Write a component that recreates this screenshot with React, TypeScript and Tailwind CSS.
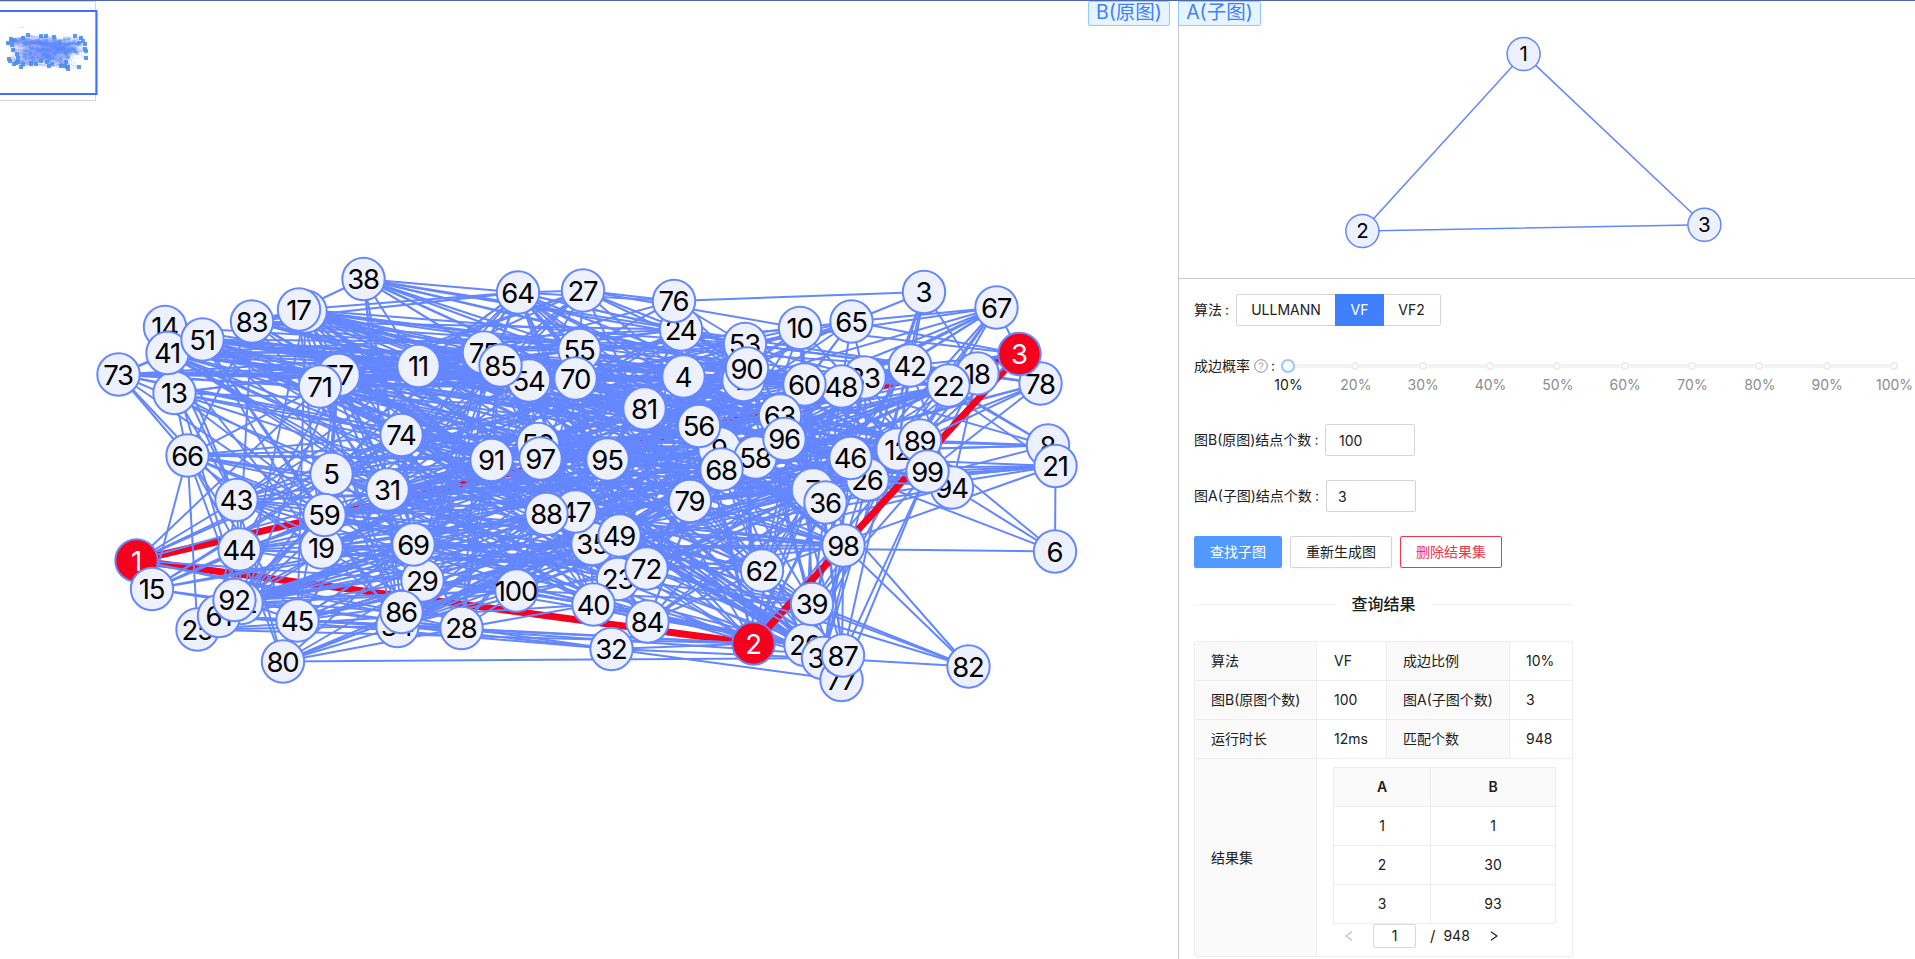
import React from 'react';

type Node = [id: number, x: number, y: number];

const NODES: Node[] = [
  [1, 136.5, 560.5], [2, 743.5, 380], [3, 924, 292], [4, 683.5, 376.5], [5, 331.5, 474], [6, 1055, 551.5],
  [7, 813, 489.5], [8, 1048, 445.5], [9, 719.5, 448.5], [10, 800, 328], [11, 418.5, 366], [12, 897.5, 449.5],
  [13, 174.5, 393], [14, 165, 327], [15, 152, 589], [16, 305.5, 311.5], [17, 299, 309.5], [18, 977.5, 373.5],
  [19, 321.5, 547.5], [20, 805.5, 645], [21, 1055.5, 466], [22, 948.5, 385.5], [23, 618, 579], [24, 681, 329.5],
  [25, 197.5, 629.5], [26, 867.5, 479.5], [27, 583, 290.5], [28, 461.5, 628], [29, 422.5, 580.5], [30, 753.5, 643.5],
  [31, 387.5, 489.5], [32, 611.5, 649], [33, 864.5, 377.5], [34, 397.5, 626], [35, 592.5, 544], [36, 825.5, 502.5],
  [37, 823, 658], [38, 363.5, 279], [39, 812, 604], [40, 593.5, 604.5], [41, 167.5, 353], [42, 910, 365.5],
  [43, 236.5, 500], [44, 239.5, 549.5], [45, 297.5, 620.5], [46, 850.5, 458], [47, 575.5, 511.5], [48, 841.5, 386.5],
  [49, 619.5, 535.5], [50, 538, 444], [51, 202.5, 339.5], [52, 241.5, 603], [53, 745, 344], [54, 529, 380.5],
  [55, 579.5, 350], [56, 699, 426], [57, 338.5, 375], [58, 755.5, 457.5], [59, 324.5, 515], [60, 804.5, 384.5],
  [61, 219, 616], [62, 762, 570.5], [63, 780, 415.5], [64, 518, 292.5], [65, 851.5, 321.5], [66, 187.5, 455.5],
  [67, 996.5, 307.5], [68, 721.5, 469.5], [69, 413.5, 544.5], [70, 575.5, 378.5], [71, 320, 386.5], [72, 646.5, 568.5],
  [73, 118.5, 374.5], [74, 401.5, 435], [75, 484, 352.5], [76, 674, 301], [77, 841.5, 680], [78, 1040.5, 383.5],
  [79, 690, 501], [80, 283, 661.5], [81, 644.5, 408.5], [82, 968.5, 666.5], [83, 252, 321.5], [84, 647.5, 621.5],
  [85, 500.5, 365.5], [86, 401.5, 612], [87, 843, 655.5], [88, 546.5, 514], [89, 920, 440.5], [90, 747, 368.5],
  [91, 491.5, 460], [92, 234.5, 600], [93, 1019.5, 354], [94, 952, 487.5], [95, 607.5, 459.5], [96, 784.5, 439],
  [97, 540.5, 458.5], [98, 843.5, 545.5], [99, 927.5, 471.5], [100, 516.5, 590.5],
];

const POS = new Map(NODES.map(([id, x, y]) => [id, [x, y] as const]));
const MATCHED: Record<number, string> = { 1: '1', 30: '2', 93: '3' };

// Neighbours of the nodes on the rim of the layout.
const RIM: Record<number, number[]> = {
  38: [64, 17, 24, 53, 75, 55, 60, 58, 11, 31, 69, 86, 54, 46, 90, 81],
  3: [76, 65, 98, 87, 39, 12, 18],
  67: [65, 93, 48, 60, 58, 36, 96, 53, 47, 12, 89, 81, 26, 79],
  6: [21, 94, 89, 69, 26],
  82: [98, 7, 39, 72, 49, 37],
  8: [89, 96, 22, 48, 12, 91, 36, 42],
  21: [99, 26, 36, 46, 68, 42, 47, 88, 62],
  78: [93, 42, 89, 99, 46, 68, 53, 24, 58],
  66: [73, 13, 71, 25, 52, 44, 45, 31, 91, 97, 74, 69, 59, 50, 83, 15, 95, 35, 86, 47],
  73: [41, 51, 71, 11, 75, 54, 70, 4, 81, 43, 59, 31, 90, 74, 97],
  1: [43, 5, 71, 74, 86, 28, 91, 29],
  15: [5, 59, 92, 31, 69, 88, 44, 74, 52],
  25: [34, 40, 30, 59],
  80: [37, 43, 44, 45, 69, 29, 49, 86, 100, 28, 35],
  77: [32, 98, 99, 39],
  14: [51, 11, 43, 55],
  13: [66, 43, 75, 91, 81, 29, 49, 24, 5, 97],
  32: [77, 28, 61, 37, 30, 34],
  27: [64, 76, 24, 55, 85, 71, 11, 90, 31, 4, 79, 91, 10, 74, 57],
  76: [24, 27, 53, 55, 75, 90, 64],
  65: [10, 67, 53, 60, 48, 33, 93, 4, 81, 56, 90, 63],
  93: [18, 22, 42, 65, 48, 10, 89],
  92: [45, 44, 86, 69, 91, 59, 100, 88, 28],
  61: [34, 28, 30, 45, 29, 43],
};

function buildEdges(): [number, number][] {
  const seen = new Set<string>();
  const edges: [number, number][] = [];
  const add = (a: number, b: number) => {
    const lo = Math.min(a, b);
    const hi = Math.max(a, b);
    const key = lo + '-' + hi;
    if (lo === hi || seen.has(key)) return;
    seen.add(key);
    edges.push([lo, hi]);
  };
  add(1, 30);
  add(1, 93);
  add(30, 93);
  for (const [id, list] of Object.entries(RIM)) list.forEach((n) => add(Number(id), n));
  const inner = NODES.map(([id]) => id).filter((id) => !RIM[id]);
  let seed = 20231;
  const next = () => {
    seed = (seed * 1103515245 + 12345) % 2147483648;
    return seed / 2147483648;
  };
  while (edges.length < 870) {
    const a = inner[Math.floor(next() * inner.length)];
    const b = inner[Math.floor(next() * inner.length)];
    const midY = (POS.get(a)![1] + POS.get(b)![1]) / 2;
    // Links thin out towards the lower half.
    if (midY > 490 && next() < 0.35) continue;
    add(a, b);
  }
  const rank = ([a, b]: [number, number]) => (a === 30 && b === 93 ? 70 : a);
  return edges.sort((a, b) => rank(a) - rank(b));
}

const EDGES = buildEdges();
const isMatch = (a: number, b: number) => a in MATCHED && b in MATCHED;

function OriginalGraph() {
  return (
    <svg width="1178" height="958" viewBox="0 1 1178 958" className="block">
      {EDGES.map(([a, b]) => {
        const [x1, y1] = POS.get(a)!;
        const [x2, y2] = POS.get(b)!;
        const hit = isMatch(a, b);
        return (
          <line key={a + '-' + b} x1={x1} y1={y1} x2={x2} y2={y2} stroke={hit ? '#f5001d' : '#6487ff'} strokeWidth={hit ? 7 : 2} />
        );
      })}
      {NODES.map(([id, x, y]) => {
        const hit = id in MATCHED;
        return (
          <g key={id}>
            <circle cx={x} cy={y} r="21.2" fill={hit ? '#f5001d' : '#ecf0ff'} stroke="#6487ff" strokeWidth="2" />
            <text x={x - 0.5} y={y + 10} textAnchor="middle" fontSize="27.5" letterSpacing="-1.2" fill={hit ? '#fff' : '#000'} className="font-['Inter',sans-serif]">
              {hit ? MATCHED[id] : id}
            </text>
          </g>
        );
      })}
    </svg>
  );
}

function Minimap() {
  const mx = (x: number) => 7.5 + (x - 118.5) * 0.0838;
  const my = (y: number) => 43.2 + (y - 374.5) * 0.083;
  return (
    <svg width="98" height="102" viewBox="0 0 98 102" className="absolute left-0 top-[-1px]">
      <path d="M0 1.5H95.5V100.5H0" fill="#fff" stroke="#d5d5d5" />
      <rect x="18" y="27" width="6" height="1" fill="#e2e5f4" />
      {EDGES.map(([a, b]) => {
        const [x1, y1] = POS.get(a)!;
        const [x2, y2] = POS.get(b)!;
        return <line key={a + '-' + b} x1={mx(x1)} y1={my(y1)} x2={mx(x2)} y2={my(y2)} stroke="#6487ff" strokeWidth="0.6" strokeOpacity="0.22" />;
      })}
      {NODES.map(([id, x, y]) => (
        <rect key={id} x={Math.round(mx(x)) - 2} y={Math.round(my(y)) - 2} width="4" height="4" fill="#4b8ff2" fillOpacity={y < 310 || y > 590 || x < 250 || x > 960 ? 0.9 : 0.4} />
      ))}
      <path d="M0 11H96.5V94H0" fill="none" stroke="#3f6fff" strokeWidth="2" />
    </svg>
  );
}

const SUB: Node[] = [[1, 1523.6, 54], [2, 1362.4, 231], [3, 1704.4, 224.8]];

function SubGraph() {
  return (
    <svg width="736" height="277" viewBox="1179 1 736 277" className="block">
      <path d="M1523.6 54L1362.4 231L1704.4 224.8Z" fill="none" stroke="#6487ff" strokeWidth="1.5" />
      {SUB.map(([id, x, y]) => (
        <g key={id}>
          <circle cx={x} cy={y} r="16.5" fill="#ecf0ff" stroke="#6487ff" strokeWidth="1.5" />
          <text x={x} y={y + 7.3} textAnchor="middle" fontSize="20.5" fill="#000" className="font-['Inter',sans-serif]">
            {id}
          </text>
        </g>
      ))}
    </svg>
  );
}

function Tag({ children, className }: { children: React.ReactNode; className: string }) {
  return (
    <span className={`absolute top-0 flex h-[25px] items-center justify-center rounded-[2px] border border-[#91caff] bg-[#e6f4ff] text-[19.5px] leading-none whitespace-nowrap text-[#3f80ff] ${className}`}>
      <span className="-mt-0.5">{children}</span>
    </span>
  );
}

function Colon() {
  return <span className="ml-[3px]">:</span>;
}

function HelpIcon() {
  return (
    <svg viewBox="0 0 14 14" className="ml-1 size-3.5" fill="none" stroke="#8c8c8c">
      <circle cx="7" cy="7" r="6.3" strokeWidth="1" />
      <path d="M5.1 5.7c0-1 .8-1.7 1.9-1.7s1.9.7 1.9 1.6c0 .8-.5 1.2-1.1 1.5-.5.2-.8.5-.8 1v.3" strokeWidth="1" />
      <path d="M7 9.4v1.1" strokeWidth="1.1" />
    </svg>
  );
}

function Arrow({ d, className }: { d: string; className: string }) {
  return (
    <svg viewBox="0 0 8 10" className={`h-2.5 w-2 ${className}`} fill="none" stroke="currentColor" strokeWidth="1.2">
      <path d={d} />
    </svg>
  );
}

function ProbabilitySlider() {
  const marks = [10, 20, 30, 40, 50, 60, 70, 80, 90, 100];
  return (
    <div className="relative h-8 w-[606px]">
      <div className="mt-[14px] h-1 rounded-[2px] bg-[#f3f3f3]" />
      {marks.map((m, i) => (
        <div key={m} className="absolute top-0 flex w-16 -translate-x-1/2 flex-col items-center" style={{ left: `${(i * 100) / 9}%` }}>
          {i === 0 ? (
            <span className="mt-[9px] size-[14px] rounded-full border-2 border-[#91caff] bg-white" />
          ) : (
            <span className="mt-3 mb-[3px] size-2 rounded-full border-2 border-[#eeeeee] bg-white" />
          )}
          <span className={`mt-[1px] pl-px text-sm leading-[22px] ${i === 0 ? 'text-[#202020]' : 'text-[#8c8c8c]'}`}>{m}%</span>
        </div>
      ))}
    </div>
  );
}

const label = 'border-r border-[#f0f0f0] bg-[#fafafa] px-4';

function Results() {
  const rows = [
    ['算法', 'VF', '成边比例', '10%'],
    ['图B(原图个数)', '100', '图A(子图个数)', '3'],
    ['运行时长', '12ms', '匹配个数', '948'],
  ];
  return (
    <div className="w-[379px] rounded-[2px] border border-[#ededed]">
      {rows.map((r) => (
        <div key={r[0]} className="grid h-[39px] grid-cols-[122px_70px_123px_62px] border-b border-[#ededed] leading-[38px] whitespace-nowrap">
          <div className={label}>{r[0]}</div>
          <div className="border-r border-[#f0f0f0] pl-[17px]">{r[1]}</div>
          <div className={label}>{r[2]}</div>
          <div className="pl-4">{r[3]}</div>
        </div>
      ))}
      <div className="flex h-[197px]">
        <div className={`flex w-[122px] items-center ${label}`}>结果集</div>
        <div className="px-4 pt-2">
          <div className="w-[223px] border border-b-0 border-[#ededed] text-center leading-[38px]">
            {[['A', 'B'], ['1', '1'], ['2', '30'], ['3', '93']].map((r, i) => (
              <div key={i} className={`grid h-[39px] grid-cols-[97px_124px] border-b border-[#ededed] ${i === 0 ? 'bg-[#fafafa] font-semibold' : ''}`}>
                <div className="border-r border-[#ededed]">{r[0]}</div>
                <div>{r[1]}</div>
              </div>
            ))}
          </div>
          <div className="flex h-6 items-center pl-3">
            <Arrow d="M7 0.7L1 5L7 9.3" className="text-[#bfbfbf]" />
            <span className="ml-5 flex h-6 w-[43px] items-center justify-center rounded-[2px] border border-[#d9d9d9]">1</span>
            <span className="ml-[14px] text-[15px]">/</span>
            <span className="ml-2">948</span>
            <Arrow d="M1 0.7L7 5L1 9.3" className="ml-5" />
          </div>
        </div>
      </div>
    </div>
  );
}

export default function App() {
  return (
    <div className="flex h-[959px] w-[1915px] overflow-hidden border-t border-[#4a68a6] bg-white font-['Inter','Noto_Sans_CJK_SC',sans-serif] text-sm text-[#202020]">
      <section className="relative w-[1178px]">
        <OriginalGraph />
        <Minimap />
        <Tag className="right-2 w-[82px]">B(原图)</Tag>
      </section>
      <aside className="relative flex flex-1 flex-col border-l border-[#c9c9c9]">
        <div className="h-[278px] border-b border-[#c9c9c9]">
          <SubGraph />
        </div>
        <Tag className="-left-px w-[83px]">A(子图)</Tag>
        <div className="flex flex-col pt-[15px] pl-[15px]">
          <div className="flex h-8 items-center">
            <span className="w-[42px] whitespace-nowrap">算法<Colon /></span>
            <div className="flex h-8 w-[205px] rounded-[2px] border border-[#d5d5d5] text-center leading-[30px]">
              <span className="w-[98px]">ULLMANN</span>
              <span className="-my-px w-[49px] bg-[#4080ff] leading-8 text-white">VF</span>
              <span className="flex-1 pr-px">VF2</span>
            </div>
          </div>
          <div className="mt-6 flex h-8 items-center">
            <span className="flex w-[94px] items-center whitespace-nowrap">成边概率<HelpIcon /><Colon /></span>
            <ProbabilitySlider />
          </div>
          <div className="mt-[42px] flex h-8 items-center">
            <span className="w-[131px] whitespace-nowrap">图B(原图)结点个数<Colon /></span>
            <span className="flex h-8 w-[90px] items-center rounded-[2px] border border-[#d5d5d5] pt-0.5 pl-[13px]">100</span>
          </div>
          <div className="mt-6 flex h-8 items-center">
            <span className="w-[132px] whitespace-nowrap">图A(子图)结点个数<Colon /></span>
            <span className="flex h-8 w-[90px] items-center rounded-[2px] border border-[#d5d5d5] pt-0.5 pl-[11px]">3</span>
          </div>
          <div className="mt-6 flex h-8 gap-2">
            <button className="w-[88px] rounded-[2px] bg-[#5299ff] text-white shadow-[0_2px_0_rgba(0,0,0,0.03)]">查找子图</button>
            <button className="w-[102px] rounded-[2px] border border-[#d5d5d5] shadow-[0_2px_0_rgba(0,0,0,0.015)]">重新生成图</button>
            <button className="w-[102px] rounded-[2px] border border-[#f5334a] text-[#f5334a]">删除结果集</button>
          </div>
          <div className="mt-[24px] flex h-6 w-[379px] items-center">
            <div className="h-px flex-1 bg-[#f0f0f0]" />
            <span className="px-4 text-base font-medium">查询结果</span>
            <div className="h-px flex-1 bg-[#f0f0f0]" />
          </div>
          <div className="mt-[25px]">
            <Results />
          </div>
        </div>
      </aside>
    </div>
  );
}
